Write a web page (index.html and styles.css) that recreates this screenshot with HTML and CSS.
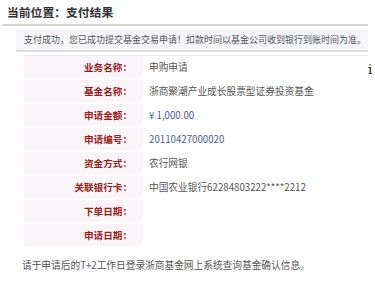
FILE: index.html
```html
<!DOCTYPE html>
<html lang="zh-CN">
<head>
    <meta charset="UTF-8">
    <title>支付结果</title>
    <link rel="stylesheet" href="styles.css">
</head>
<body>
    <div class="page">
        <div class="main">
            <h2 class="crumb">当前位置：支付结果</h2>

            <div class="notice">支付成功，您已成功提交基金交易申请！扣款时间以基金公司收到银行到账时间为准。</div>

            <table class="result">
                <tr><th>业务名称：</th><td>申购申请</td></tr>
                <tr><th>基金名称：</th><td>浙商聚潮产业成长股票型证券投资基金</td></tr>
                <tr><th>申请金额：</th><td><span class="num">¥ 1,000.00</span></td></tr>
                <tr><th>申请编号：</th><td><span class="num">20110427000020</span></td></tr>
                <tr><th>资金方式：</th><td>农行网银</td></tr>
                <tr><th>关联银行卡：</th><td>中国农业银行62284803222****2212</td></tr>
                <tr><th>下单日期：</th><td></td></tr>
                <tr><th>申请日期：</th><td></td></tr>
            </table>

            <p class="tip">请于申请后的<span class="num">T+2</span>工作日登录浙商基金网上系统查询基金确认信息。</p>
        </div>
        <div class="stray">i</div>
    </div>
</body>
</html>
```

FILE: styles.css
```css
body {
    margin: 0;
    padding: 5px 0 0 2px;
    font-family: "Noto Sans CJK SC", "Noto Sans", sans-serif;
    font-size: 9.2px;
    color: #555;
    background-color: #fff;
}
.page {
    display: flex;
}
.main {
    width: 366px;
}
.crumb {
    margin: 0;
    padding: 0 0 5px 5px;
    font-size: 11.8px;
    line-height: 14px;
    font-weight: bold;
    color: #333;
    border-bottom: 2px solid #d6d6d6;
}
.notice {
    margin: 3px 0 0 14px;
    padding: 0 0 0 8px;
    height: 21px;
    line-height: 21px;
    font-size: 9px;
    background-color: #f6f6fa;
    border-bottom: 2px solid #dcdcdc;
    white-space: nowrap;
}
.result {
    margin: 3px 0 0 22px;
    width: 344px;
    border-collapse: collapse;
    border-top: 1px solid #ececec;
    border-bottom: 2px solid #dcdcdc;
}
.result th {
    width: 108px;
    height: 22px;
    padding: 0 11px 0 0;
    text-align: right;
    font-size: 9.6px;
    font-weight: bold;
    color: #9b1c1c;
    background-color: #faf5f8;
    border-bottom: 2px solid #fff;
}
.result td {
    padding: 0 0 0 6px;
    height: 22px;
    font-size: 9.7px;
    border-bottom: 2px solid #fff;
    white-space: nowrap;
}
.num {
    color: #4d5b94;
}
.tip {
    margin: 10px 0 0 20px;
    font-size: 9.7px;
    white-space: nowrap;
}
.stray {
    padding-top: 57px;
    font-family: "DejaVu Serif", serif;
    font-size: 13px;
    color: #111;
}
```
